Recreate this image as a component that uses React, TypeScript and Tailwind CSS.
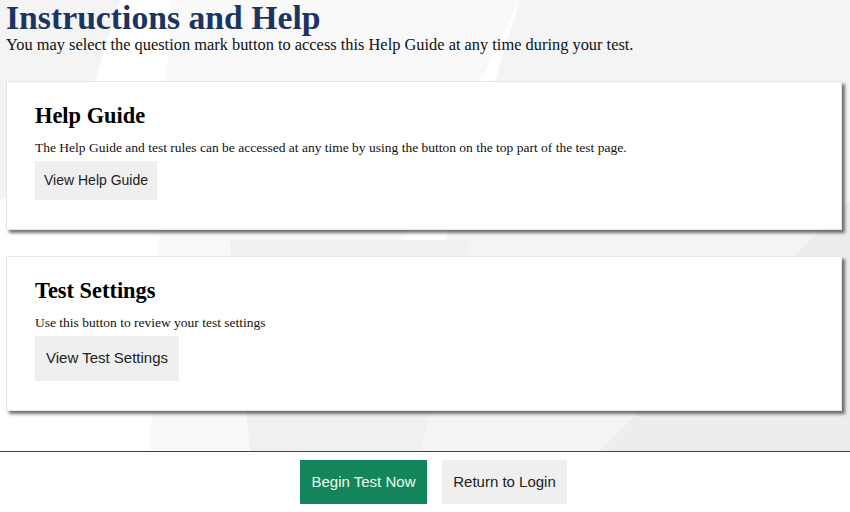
import React from 'react';

const serif = "font-['Liberation_Serif','Times_New_Roman',serif]";
const sans = "font-['Liberation_Sans',Arial,sans-serif]";

const Backdrop: React.FC = () => (
  <svg className="absolute inset-0 w-full h-full" viewBox="0 0 850 451" preserveAspectRatio="none">
    <rect width="850" height="451" fill="#ffffff" />
    <polygon points="0,0 120,0 70,160 0,200" fill="#f4f4f4" />
    <polygon points="170,0 520,0 300,451 150,451" fill="#f9f9f9" />
    <polygon points="520,0 850,0 850,200 640,451 380,451" fill="#f4f4f4" />
    <polygon points="850,200 850,451 600,451" fill="#ededed" />
    <polygon points="230,240 470,240 420,451 250,451" fill="#f0f0f0" />
  </svg>
);

interface CardProps {
  title: string;
  text: string;
  button: string;
  big?: boolean;
}

const Card: React.FC<CardProps> = ({ title, text, button, big }) => (
  <div className="relative bg-white border border-[#e6e6e6] shadow-[3px_3px_3px_rgba(0,0,0,0.55)] pl-[28px] pr-6 pt-[20px] pb-[29px]">
    <h2 className={`${serif} font-bold text-[22.4px] leading-[28px] text-black`}>{title}</h2>
    <p className={`${serif} text-[13.5px] leading-[18px] text-[#111] mt-[9px]`}>{text}</p>
    <button
      className={`${sans} mt-[4px] bg-[#efefef] text-[#222] ${
        big ? 'text-[15px] h-[45px] px-[11px]' : 'text-[14px] h-[39px] px-[9px]'
      }`}
    >
      {button}
    </button>
  </div>
);

export default function App() {
  return (
    <div className="w-[850px] h-[512px] flex flex-col bg-white overflow-hidden">
      <div className="relative h-[451px]">
        <Backdrop />
        <div className="relative px-[6px]">
          <h1 className={`${serif} font-bold text-[33.7px] leading-[36px] text-[#1c3461]`}>
            Instructions and Help
          </h1>
          <p className={`${serif} text-[16.4px] leading-[20px] text-[#111] mt-[-1px]`}>
            You may select the question mark button to access this Help Guide at any time during your test.
          </p>
          <div className="mt-[26px] flex flex-col gap-[26px] pr-[2px]">
            <Card
              title="Help Guide"
              text="The Help Guide and test rules can be accessed at any time by using the button on the top part of the test page."
              button="View Help Guide"
            />
            <Card
              title="Test Settings"
              text="Use this button to review your test settings"
              button="View Test Settings"
              big
            />
          </div>
        </div>
      </div>
      <div className="border-t border-[#34434f] flex-1 flex items-start justify-center gap-[15px] pt-[8px] pl-[17px]">
        <button className={`${sans} h-[44px] w-[127px] bg-[#14855a] text-[#eafff2] text-[15px]`}>
          Begin Test Now
        </button>
        <button className={`${sans} h-[44px] w-[125px] bg-[#efefef] text-[#222] text-[15px]`}>
          Return to Login
        </button>
      </div>
    </div>
  );
}
